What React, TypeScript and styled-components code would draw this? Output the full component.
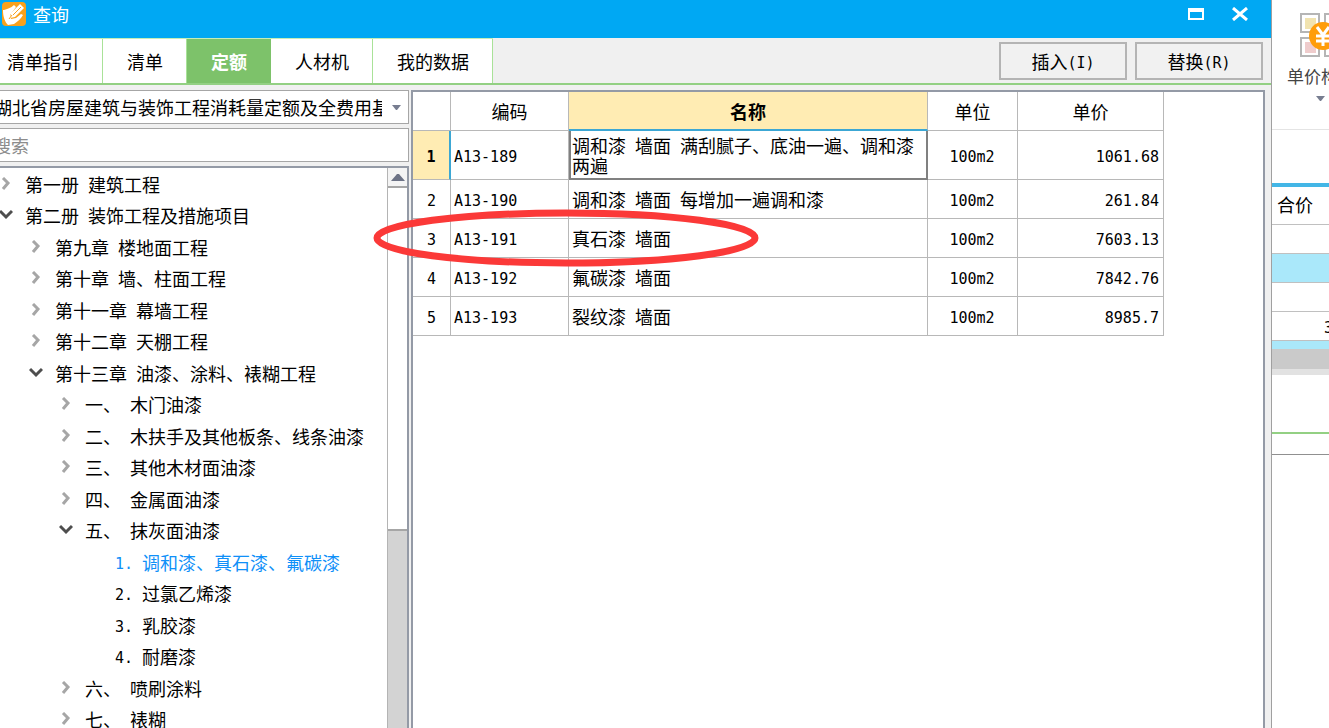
import React, { useState } from "react";
import styled, { createGlobalStyle, css } from "styled-components";

const GlobalStyle = createGlobalStyle`
  * { box-sizing: border-box; }
  body {
    margin: 0;
    overflow: hidden;
    background: #fff;
    color: #000;
    font: 18px/20px "Noto Sans CJK SC", sans-serif;
  }
  button, input, select { font: inherit; color: inherit; border-radius: 0; }
  button { background: none; border: 0; padding: 0; margin: 0; }
`;

const LatinRun = styled.span`
  font-family: "DejaVu Sans Mono", monospace;
  font-size: 15px;
  line-height: 12px;
  vertical-align: 1px;
  white-space: pre-wrap;
`;

/* Sets half-width runs in the monospaced face, half as wide as a Chinese character. */
function Mixed({ children }: { children: string }) {
  return (
    <>
      {children.split(/([\x20-\x7e]+)/).map((part, i) =>
        i % 2 ? <LatinRun key={i}>{part}</LatinRun> : part
      )}
    </>
  );
}

const Screen = styled.div`
  display: flex;
  height: 100vh;
  overflow: hidden;
`;

const Dialog = styled.section`
  position: relative;
  flex: 1;
  min-width: 0;
  display: flex;
  flex-direction: column;
  background: #f0f0f0;
`;

const TitleBar = styled.header`
  display: flex;
  align-items: flex-start;
  gap: 7px;
  height: 38px;
  padding: 2px 22px 0 2px;
  background: #00a8f3;
  color: #fff;
`;

const Title = styled.h1`
  flex: 1;
  margin: 0;
  font-size: 18px;
  font-weight: 400;
  line-height: 24px;
`;

const WindowButton = styled.button`
  display: grid;
  place-items: center;
  width: 18px;
  height: 24px;
  margin-left: 19px;
`;

const TabBar = styled.div`
  display: flex;
  justify-content: space-between;
  align-items: center;
  height: 47px;
  padding-right: 8px;
  border-bottom: 2px solid #93d083;
`;

const Tabs = styled.nav`
  display: flex;
  align-self: stretch;
  border-top: 1px solid #c4edb8;
`;

const Tab = styled.button<{ $active: boolean; $first: boolean }>`
  padding: 0 23px 0 ${(p) => (p.$first ? 7 : 24)}px;
  border-right: 1px solid #a9e298;
  background: #fff;
  ${(p) =>
    p.$active &&
    css`
      padding: 0 24px;
      border-right: 0;
      background: #7dc26a;
      color: #fff;
      font-weight: 700;
    `}
`;

const Actions = styled.div`
  display: flex;
  gap: 8px;
`;

const ActionButton = styled.button`
  width: 128px;
  height: 38px;
  border: 2px solid #b4b4b4;
  background: #f1f1f1;
`;

const Body = styled.div`
  flex: 1;
  min-height: 0;
  display: flex;
  gap: 2px;
  padding: 5px 6px 0 0;
`;

/* The dialog runs off the left edge of the screen. */
const Sidebar = styled.aside`
  flex: 0 0 421px;
  display: flex;
  flex-direction: column;
  gap: 4px;
  margin-left: -12px;
`;

const Combo = styled.div`
  display: flex;
  align-items: center;
  height: 34px;
  border: 1px solid #a6a6a6;
  background: #fff;
`;

const ComboSelect = styled.select`
  flex: 1;
  width: 100%;
  min-width: 0;
  height: 30px;
  padding: 0 26px 0 5px;
  margin-right: -26px;
  border: 0;
  background: transparent;
  appearance: none;
`;

const ComboArrow = styled.svg`
  flex: none;
  margin-right: 6px;
  margin-left: 10px;
  pointer-events: none;
`;

const Search = styled.input`
  height: 34px;
  padding: 0 4px;
  border: 1px solid #a6a6a6;
  background: #fff;
  &::placeholder { color: #8c8c8c; opacity: 1; }
`;

const TreePane = styled.div`
  flex: 1;
  min-height: 0;
  display: flex;
  border: 2px solid #949aa6;
  border-bottom: 0;
  background: #fff;
`;

const Tree = styled.ul`
  flex: 1;
  min-width: 0;
  margin: 0;
  padding: 0 0 0 9px;
  overflow: hidden;
  list-style: none;
`;

const TreeRow = styled.li<{ $level: number }>`
  height: 31px;
  padding-left: ${(p) => p.$level * 30}px;
  &:nth-child(even) { height: 32px; }
`;

const TreeButton = styled.button<{ $selected: boolean }>`
  display: flex;
  align-items: center;
  gap: 12px;
  height: 100%;
  white-space: nowrap;
  color: ${(p) => (p.$selected ? "#1090f8" : "#000")};
`;

const ChevronBox = styled.span`
  display: flex;
  width: 14px;
`;

const Scrollbar = styled.div`
  width: 20px;
  display: flex;
  flex-direction: column;
  border-left: 1px solid #b4b4b4;
  background: #d3d3d3;
`;

const ScrollUp = styled.button`
  display: grid;
  place-items: center;
  height: 20px;
  border-bottom: 2px solid #a6a6a6;
  background: #f4f4f4;
`;

const ScrollThumb = styled.div`
  height: 343px;
  border-bottom: 2px solid #a6a6a6;
  background: #fff;
`;

const GridPane = styled.main`
  flex: 1;
  min-width: 0;
  border: 2px solid #949aa6;
  border-bottom: 0;
  background: #fff;
`;

const Grid = styled.table`
  width: 751px;
  table-layout: fixed;
  border-collapse: separate;
  border-spacing: 0;
`;

const HeadCell = styled.th<{ $active?: boolean }>`
  height: 39px;
  padding: 0;
  border-right: 1px solid #b8b8b8;
  border-bottom: 1px solid #b8b8b8;
  font-weight: ${(p) => (p.$active ? 700 : 400)};
  ${(p) =>
    p.$active &&
    css`
      background: #ffecb3;
      border-bottom: 2px solid #3ca7d4;
    `}
`;

const RowNumber = styled.th<{ $active: boolean }>`
  height: 39px;
  padding: 0;
  border-right: 1px solid #b8b8b8;
  border-bottom: 1px solid #b8b8b8;
  font-weight: ${(p) => (p.$active ? 700 : 400)};
  ${(p) =>
    p.$active &&
    css`
      background: #ffecb3;
      border-right: 2px solid #3ca7d4;
    `}
`;

const Cell = styled.td<{ $align?: string; $active?: boolean }>`
  padding: 0 4px 0 3px;
  border-right: 1px solid #b8b8b8;
  border-bottom: 1px solid #b8b8b8;
  text-align: ${(p) => p.$align || "left"};
  ${(p) =>
    p.$active &&
    css`
      height: 49px;
      padding: 3px 8px 3px 1px;
      border: 2px solid #808080;
      border-top: 0;
    `}
`;

const Highlight = styled.svg`
  position: absolute;
  left: 372px;
  top: 208px;
  pointer-events: none;
`;

const Background = styled.aside`
  flex: 0 0 58px;
  overflow: hidden;
  border-left: 1px solid #a0a0a0;
  background: #fff;
`;

const Ribbon = styled.div`
  height: 130px;
  padding: 12px 0 0 13px;
  border-bottom: 1px solid #e4e4e4;
`;

const RibbonButton = styled.button`
  display: flex;
  flex-direction: column;
  align-items: center;
  width: 72px;
  color: #444;
  font-size: 17px;
  white-space: nowrap;
`;

const RibbonLabel = styled.span`
  margin: 8px 0 10px;
`;

const SheetHead = styled.div`
  height: 42px;
  margin-top: 53px;
  padding: 7px 5px 0;
  border-top: 4px solid #43b6e6;
  border-bottom: 1px solid #c0c0c0;
`;

const SheetRow = styled.div<{ $tinted?: boolean }>`
  height: 29px;
  padding: 4px 0 0 52px;
  border-bottom: 1px solid #c0c0c0;
  background: ${(p) => (p.$tinted ? "#aae8fa" : "#fff")};
`;

const SheetTail = styled.div`
  height: 34px;
  border-top: 8px solid #aae8fa;
  border-bottom: 6px solid #e2e2e2;
  background: #cacaca;
`;

const SheetFooter = styled.div`
  height: 23px;
  margin-top: 57px;
  border-top: 2px solid #93d083;
  border-bottom: 1px solid #909090;
`;

function AppIcon() {
  return (
    <svg width="24" height="24" viewBox="0 0 24 24" aria-hidden="true">
      <rect width="24" height="24" rx="4" fill="#f9a11b" />
      <path d="M2 8c3-1 7-2 10-5l2 2-3 4-3 4 1 4 5-1 5-4 2 1c-2 4-6 7-9 9l-6 1c-3-3-5-8-5-15z" fill="#fff" />
      <path d="M8 16l1-5 9-9 4 4-9 9z" fill="#fff" />
      <path d="M11 13l8-8M7 17l3-4" stroke="#f9a11b" strokeWidth="1" />
    </svg>
  );
}

function Chevron({ open }: { open: boolean }) {
  return (
    <svg width="14" height="14" viewBox="0 0 14 14" fill="none" aria-hidden="true">
      {open ? (
        <path d="M1 3l6 6 6-6" stroke="#4e4e4e" strokeWidth="3" />
      ) : (
        <path d="M4 1l5 5-5 6" stroke="#a6a6a6" strokeWidth="3" />
      )}
    </svg>
  );
}

function PriceIcon() {
  return (
    <svg width="44" height="46" viewBox="0 0 44 46" aria-hidden="true">
      <g fill="#fff" stroke="#b5b5b5" strokeWidth="2">
        <rect x="2" y="2" width="18" height="18" />
        <rect x="26" y="2" width="18" height="18" />
        <rect x="2" y="26" width="18" height="18" />
        <rect x="26" y="26" width="18" height="18" />
      </g>
      <rect x="6" y="6" width="11" height="11" fill="#f1e3b0" />
      <rect x="6" y="30" width="11" height="11" fill="#efcccc" />
      <circle cx="24" cy="24" r="14" fill="#ff9d0a" />
      <path d="M18 15l6 8 6-8M24 23v11M17 24h14M17 29h14" fill="none" stroke="#fff" strokeWidth="3" />
    </svg>
  );
}

const tabs = ["清单指引", "清单", "定额", "人材机", "我的数据"];

type Node = { text: string; level: number; state?: "open" | "closed" };

const nodes: Node[] = [
  { text: "第一册 建筑工程", level: 0, state: "closed" },
  { text: "第二册 装饰工程及措施项目", level: 0, state: "open" },
  { text: "第九章 楼地面工程", level: 1, state: "closed" },
  { text: "第十章 墙、柱面工程", level: 1, state: "closed" },
  { text: "第十一章 幕墙工程", level: 1, state: "closed" },
  { text: "第十二章 天棚工程", level: 1, state: "closed" },
  { text: "第十三章 油漆、涂料、裱糊工程", level: 1, state: "open" },
  { text: "一、 木门油漆", level: 2, state: "closed" },
  { text: "二、 木扶手及其他板条、线条油漆", level: 2, state: "closed" },
  { text: "三、 其他木材面油漆", level: 2, state: "closed" },
  { text: "四、 金属面油漆", level: 2, state: "closed" },
  { text: "五、 抹灰面油漆", level: 2, state: "open" },
  { text: "1. 调和漆、真石漆、氟碳漆", level: 3 },
  { text: "2. 过氯乙烯漆", level: 3 },
  { text: "3. 乳胶漆", level: 3 },
  { text: "4. 耐磨漆", level: 3 },
  { text: "六、 喷刷涂料", level: 2, state: "closed" },
  { text: "七、 裱糊", level: 2, state: "closed" },
];

const rows = [
  ["A13-189", "调和漆 墙面 满刮腻子、底油一遍、调和漆两遍", "100m2", "1061.68"],
  ["A13-190", "调和漆 墙面 每增加一遍调和漆", "100m2", "261.84"],
  ["A13-191", "真石漆 墙面", "100m2", "7603.13"],
  ["A13-192", "氟碳漆 墙面", "100m2", "7842.76"],
  ["A13-193", "裂纹漆 墙面", "100m2", "8985.7"],
];

export default function App() {
  const [tab, setTab] = useState("定额");
  const [selected, setSelected] = useState(12);

  return (
    <Screen>
      <GlobalStyle />
      <Dialog>
        <TitleBar>
          <AppIcon />
          <Title>查询</Title>
          <WindowButton aria-label="还原">
            <svg width="18" height="14" viewBox="0 0 18 14">
              <path d="M1 1h16v12H1zM3 5v6h12V5z" fill="#fff" fillRule="evenodd" />
            </svg>
          </WindowButton>
          <WindowButton aria-label="关闭">
            <svg width="18" height="14" viewBox="0 0 18 14">
              <path d="M2 1l14 12M16 1L2 13" stroke="#fff" strokeWidth="3" />
            </svg>
          </WindowButton>
        </TitleBar>

        <TabBar>
          <Tabs>
            {tabs.map((name, i) => (
              <Tab key={name} $active={name === tab} $first={i === 0} onClick={() => setTab(name)}>
                {name}
              </Tab>
            ))}
          </Tabs>
          <Actions>
            <ActionButton><Mixed>插入(I)</Mixed></ActionButton>
            <ActionButton><Mixed>替换(R)</Mixed></ActionButton>
          </Actions>
        </TabBar>

        <Body>
          <Sidebar>
            <Combo>
              <ComboSelect aria-label="定额库">
                <option>湖北省房屋建筑与装饰工程消耗量定额及全费用基</option>
              </ComboSelect>
              <ComboArrow width="10" height="5" viewBox="0 0 10 5">
                <path d="M0 0h9L5 5H4z" fill="#777d90" />
              </ComboArrow>
            </Combo>
            <Search type="search" placeholder="搜索" aria-label="搜索" />
            <TreePane>
              <Tree>
                {nodes.map((node, i) => (
                  <TreeRow key={node.text} $level={node.level}>
                    <TreeButton $selected={i === selected} onClick={() => setSelected(i)}>
                      <ChevronBox>{node.state && <Chevron open={node.state === "open"} />}</ChevronBox>
                      <span><Mixed>{node.text}</Mixed></span>
                    </TreeButton>
                  </TreeRow>
                ))}
              </Tree>
              <Scrollbar>
                <ScrollUp aria-label="向上滚动">
                  <svg width="14" height="8" viewBox="0 0 14 8">
                    <path d="M0 8l6-7h2l6 7z" fill="#6d7386" />
                  </svg>
                </ScrollUp>
                <ScrollThumb />
              </Scrollbar>
            </TreePane>
          </Sidebar>

          <GridPane>
            <Grid>
              <colgroup>
                <col width="38" />
                <col width="118" />
                <col width="359" />
                <col width="90" />
                <col width="146" />
              </colgroup>
              <thead>
                <tr>
                  <HeadCell />
                  <HeadCell scope="col">编码</HeadCell>
                  <HeadCell scope="col" $active>名称</HeadCell>
                  <HeadCell scope="col">单位</HeadCell>
                  <HeadCell scope="col">单价</HeadCell>
                </tr>
              </thead>
              <tbody>
                {rows.map(([code, name, unit, price], i) => (
                  <tr key={code}>
                    <RowNumber scope="row" $active={i === 0}><Mixed>{String(i + 1)}</Mixed></RowNumber>
                    <Cell><Mixed>{code}</Mixed></Cell>
                    <Cell $active={i === 0}><Mixed>{name}</Mixed></Cell>
                    <Cell $align="center"><Mixed>{unit}</Mixed></Cell>
                    <Cell $align="right"><Mixed>{price}</Mixed></Cell>
                  </tr>
                ))}
              </tbody>
            </Grid>
          </GridPane>
        </Body>

        <Highlight width="388" height="60" viewBox="0 0 388 60" aria-hidden="true">
          <ellipse cx="194" cy="30" rx="189" ry="25" fill="none" stroke="#fb3938" strokeWidth="7" />
        </Highlight>
      </Dialog>

      <Background>
        <Ribbon>
          <RibbonButton>
            <PriceIcon />
            <RibbonLabel>单价构成</RibbonLabel>
            <svg width="10" height="5" viewBox="0 0 10 5" aria-hidden="true">
              <path d="M0 0h9L5 5H4z" fill="#777d90" />
            </svg>
          </RibbonButton>
        </Ribbon>
        <SheetHead>合价</SheetHead>
        <SheetRow />
        <SheetRow $tinted />
        <SheetRow />
        <SheetRow><Mixed>3</Mixed></SheetRow>
        <SheetTail />
        <SheetFooter />
      </Background>
    </Screen>
  );
}
